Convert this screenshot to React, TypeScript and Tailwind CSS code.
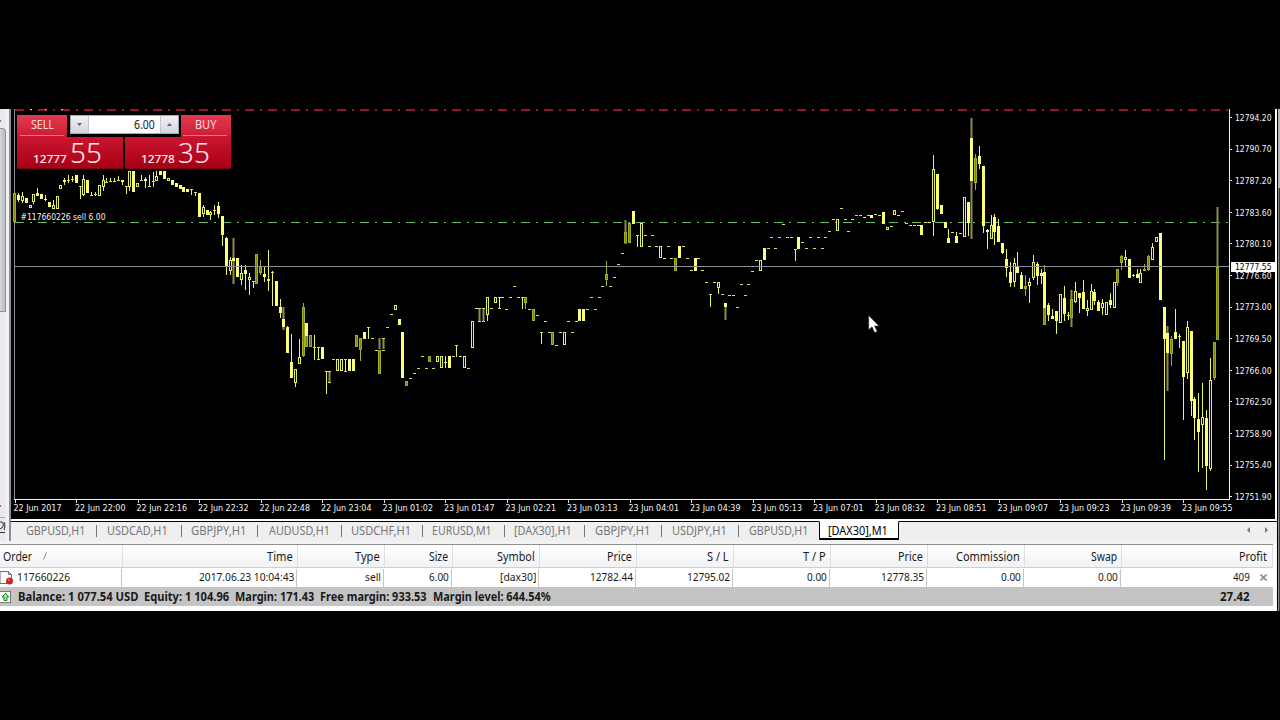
import { useLayoutEffect, useRef, useState } from 'react'

// f = filled, h = hollow, d = shaded, p = pale bar, x = doji
type Kind = 'f' | 'h' | 'd' | 'p' | 'x'
// x, kind, body top, body bottom, wick top, wick bottom, faded wick
type Candle = [number, Kind, number, number, number?, number?, number?]

// candle coordinates are thirds of a pixel, relative to the block origin
const BLOCKS: { ox: number; oy: number; candles: Candle[] }[] = [
  {
    ox: 0,
    oy: 100,
    candles: [
      [45, 'd', 280, 366, 276, 368], [56, 'f', 285, 300, 280, 307], [68, 'h', 288, 302, 275, 308],
      [79, 'f', 294, 308], [91, 'h', 315, 323], [102, 'h', 283, 306, 283, 312],
      [113, 'f', 279, 287, 265, 287], [125, 'f', 283, 297], [137, 'f', 296, 301, 285, 303],
      [149, 'f', 305, 322], [160, 'h', 316, 328, 300, 328], [172, 'h', 288, 328],
      [183, 'h', 256, 268], [194, 'f', 240, 245, 235, 256], [206, 'x', 240, 240, 225, 248],
      [217, 'x', 236, 236, 228, 246], [229, 'f', 226, 250], [241, 'x', 257, 257, 257, 296],
      [252, 'h', 238, 284, 226, 290], [264, 'f', 240, 278], [275, 'x', 285, 285, 276, 288],
      [287, 'x', 282, 282, 276, 288], [299, 'h', 256, 287], [310, 'h', 240, 262, 226, 275],
      [321, 'x', 245, 245, 235, 248], [333, 'x', 243, 243, 235, 248], [345, 'x', 243, 243, 235, 248],
      [356, 'x', 240, 240, 228, 244], [368, 'f', 241, 247, 240, 256], [380, 'x', 257, 257, 257, 282],
      [390, 'h', 214, 260, 214, 275], [402, 'f', 214, 276], [414, 'h', 248, 262],
      [425, 'x', 240, 240, 226, 244], [437, 'f', 238, 243, 230, 262], [448, 'x', 258, 258, 226, 262],
      [460, 'x', 244, 244, 215, 260], [471, 'h', 228, 242, 214, 242], [483, 'f', 214, 226],
      [495, 'f', 214, 238], [506, 'h', 235, 242], [518, 'f', 240, 254], [529, 'f', 250, 260],
      [541, 'f', 255, 266], [552, 'f', 262, 275], [564, 'f', 267, 276], [575, 'x', 268, 268, 268, 286],
      [587, 'x', 275, 275, 275, 288], [598, 'f', 280, 350], [610, 'h', 320, 342, 316, 352],
      [622, 'f', 330, 346], [633, 'h', 336, 346, 334, 362], [645, 'x', 331, 331, 316, 346],
      [656, 'f', 318, 342, 306, 355],
    ],
  },
  {
    ox: 0,
    oy: 220,
    candles: [
      [667, 'f', -12, 44, -12, 77], [679, 'f', 53, 139, 50, 163], [691, 'h', 120, 152, 110, 163],
      [702, 'f', 114, 122, 55, 192, 1], [713, 'f', 114, 172], [725, 'h', 158, 180, 136, 197],
      [737, 'f', 150, 161, 136, 212], [748, 'h', 171, 179, 158, 224], [760, 'x', 183, 183, 183, 204],
      [771, 'd', 102, 191], [782, 'd', 138, 160, 121, 166], [794, 'f', 161, 172, 140, 185],
      [806, 'h', 176, 184, 90, 212], [817, 'x', 157, 157, 154, 258], [829, 'f', 182, 258],
      [841, 'f', 262, 278, 236, 292], [852, 'f', 297, 320, 262, 332, 1], [863, 'f', 322, 399, 318, 399],
      [875, 'f', 426, 473, 342, 473], [886, 'h', 447, 488, 447, 500], [898, 'h', 412, 433, 357, 433],
      [910, 'd', 262, 408, 250, 413], [921, 'd', 346, 382], [921, 'f', 310, 348], [932, 'p', 346, 382],
      [943, 'x', 381, 381, 346, 420],
    ],
  },
  {
    ox: 300,
    oy: 200,
    candles: [
      [56, 'x', 441, 441, 440, 478], [56, 'x', 478, 478], [67, 'f', 440, 478], [79, 'x', 514, 514, 514, 583],
      [90, 'x', 514, 514, 514, 547, 1], [90, 'x', 547, 547], [101, 'x', 478, 478],
      [113, 'h', 478, 514], [125, 'h', 478, 514], [137, 'x', 478, 478, 478, 514], [137, 'x', 514, 514],
      [148, 'f', 478, 514], [160, 'f', 478, 514], [171, 'd', 405, 442], [182, 'd', 415, 449, 415, 485],
      [194, 'f', 396, 416], [206, 'x', 380, 380, 380, 416], [217, 'x', 415, 415], [229, 'x', 449, 449],
      [240, 'd', 449, 522, 415, 449, 1], [252, 'x', 415, 415, 415, 449, 1], [252, 'x', 449, 449],
      [263, 'x', 380, 380], [275, 'x', 343, 343], [286, 'h', 316, 331], [298, 'f', 357, 374],
      [309, 'f', 397, 534], [321, 'd', 544, 559], [333, 'x', 533, 533], [343, 'x', 519, 519],
      [355, 'x', 505, 505], [367, 'x', 469, 469], [379, 'x', 505, 505], [390, 'd', 469, 487],
      [402, 'x', 505, 505], [413, 'h', 469, 487], [425, 'h', 469, 505], [436, 'x', 487, 487, 469, 505],
      [448, 'f', 469, 505], [460, 'x', 469, 469], [471, 'x', 436, 436, 434, 469], [483, 'x', 469, 469],
      [494, 'h', 469, 505], [505, 'x', 505, 505], [517, 'h', 364, 445], [529, 'x', 325, 325],
      [540, 'x', 325, 325, 325, 364, 1], [540, 'x', 364, 364], [550, 'x', 325, 325, 325, 364, 1], [550, 'x', 364, 364],
      [562, 'h', 292, 346, 292, 364], [574, 'x', 325, 325], [586, 'h', 292, 310], [598, 'x', 292, 292, 292, 325],
      [598, 'x', 325, 325], [609, 'x', 292, 292], [620, 'x', 328, 328], [631, 'x', 292, 292], [643, 'x', 257, 257],
      [655, 'x', 292, 292], [667, 'x', 292, 292, 292, 328], [678, 'd', 292, 310, 292, 328],
      [690, 'x', 328, 328], [701, 'd', 328, 364], [712, 'x', 346, 346], [725, 'x', 397, 397, 397, 434],
      [736, 'x', 364, 364], [748, 'x', 397, 397], [759, 'd', 397, 434], [770, 'x', 434, 434],
      [782, 'x', 397, 397], [793, 'h', 397, 434], [805, 'x', 364, 364], [817, 'x', 397, 397],
      [829, 'x', 364, 364], [840, 'f', 328, 364], [851, 'f', 328, 364], [863, 'x', 328, 328],
      [874, 'x', 292, 292], [886, 'x', 328, 328], [898, 'x', 292, 292], [908, 'x', 257, 257],
      [920, 'd', 223, 240, 183, 257], [931, 'x', 257, 257], [943, 'x', 232, 232],
    ],
  },
  {
    ox: 600,
    oy: 190,
    candles: [
      [55, 'x', 223, 223], [67, 'x', 189, 189], [78, 'd', 125, 158, 90, 162, 1], [90, 'd', 98, 160],
      [101, 'f', 62, 101], [112, 'x', 134, 134, 134, 170], [124, 'h', 98, 170], [136, 'x', 134, 134],
      [148, 'x', 169, 169], [159, 'x', 134, 134], [170, 'x', 169, 169], [181, 'h', 169, 205],
      [193, 'x', 204, 204], [205, 'x', 169, 169], [216, 'x', 204, 204], [228, 'd', 205, 242],
      [239, 'f', 169, 205], [251, 'x', 169, 169], [263, 'x', 204, 204], [275, 'x', 241, 241],
      [286, 'f', 205, 242], [297, 'x', 204, 204], [309, 'x', 241, 241], [320, 'x', 275, 275],
      [332, 'x', 311, 311, 311, 349], [343, 'x', 275, 275], [355, 'h', 275, 293, 275, 311],
      [367, 'x', 311, 311], [378, 'f', 338, 351, 338, 388, 1], [390, 'x', 316, 316], [401, 'x', 316, 316],
      [412, 'x', 350, 350], [424, 'x', 281, 281], [436, 'x', 316, 316], [447, 'x', 281, 281],
      [459, 'x', 244, 244], [470, 'x', 209, 209], [481, 'h', 209, 244], [493, 'f', 175, 209],
      [505, 'x', 175, 175], [516, 'x', 140, 140], [528, 'x', 175, 175], [539, 'x', 140, 140],
      [551, 'x', 103, 103], [563, 'x', 140, 140], [574, 'x', 140, 140], [586, 'x', 176, 176, 176, 211],
      [597, 'f', 140, 176], [608, 'x', 157, 157], [620, 'x', 175, 175], [632, 'x', 140, 140],
      [643, 'x', 175, 175], [655, 'x', 140, 140], [667, 'x', 175, 175], [678, 'x', 140, 140],
      [689, 'x', 123, 123], [701, 'x', 88, 88], [712, 'h', 88, 123], [724, 'x', 54, 54],
      [736, 'x', 88, 88], [747, 'x', 123, 123], [759, 'x', 88, 88], [770, 'x', 74, 74],
      [782, 'x', 74, 74], [793, 'x', 82, 82], [805, 'x', 74, 74], [816, 'f', 74, 83],
      [828, 'x', 71, 71], [839, 'x', 74, 74], [851, 'f', 66, 101], [862, 'h', 111, 119],
      [874, 'x', 109, 109], [885, 'h', 60, 75], [897, 'x', 76, 76], [908, 'x', 63, 63],
    ],
  },
  {
    ox: 900,
    oy: 100,
    candles: [
      [20, 'x', 369, 369], [31, 'x', 376, 376], [43, 'x', 376, 376], [55, 'x', 376, 376],
      [66, 'f', 376, 405], [78, 'x', 367, 367], [89, 'x', 367, 367], [100, 'h', 208, 367, 166, 409],
      [112, 'f', 223, 326, 223, 331], [124, 'f', 316, 342], [136, 'f', 367, 383], [147, 'f', 415, 429, 388, 429],
      [158, 'x', 396, 396], [169, 'f', 409, 428, 396, 428], [181, 'x', 399, 399], [193, 'h', 292, 410],
      [205, 'f', 307, 369, 307, 409], [216, 'f', 114, 243, 53, 416, 1], [227, 'd', 175, 250, 162, 270],
      [239, 'f', 168, 191, 138, 206], [250, 'f', 197, 377, 197, 398], [262, 'f', 389, 397, 386, 446],
      [274, 'h', 374, 416, 346, 416], [285, 'f', 352, 395, 342, 434], [297, 'f', 378, 426, 357, 426],
      [308, 'f', 430, 459, 430, 463], [320, 'f', 476, 503, 447, 530], [332, 'f', 516, 549, 487, 563],
      [343, 'h', 490, 545, 475, 563], [354, 'f', 500, 518, 455, 518], [366, 'f', 525, 566, 517, 566],
      [377, 'd', 558, 566, 525, 587], [389, 'h', 547, 557, 533, 609], [401, 'h', 487, 535, 466, 541],
      [412, 'f', 492, 527, 487, 557], [424, 'f', 519, 527, 507, 552], [435, 'd', 620, 676, 496, 676],
      [435, 'f', 516, 624], [446, 'f', 614, 644, 610, 665], [458, 'f', 647, 656, 627, 656],
      [469, 'f', 633, 662, 633, 702], [481, 'h', 583, 670], [493, 'f', 594, 641, 558, 662],
      [505, 'x', 646, 646, 636, 660], [515, 'd', 597, 653, 570, 682, 1], [527, 'h', 574, 606, 547, 609],
      [539, 'f', 579, 594, 579, 638], [550, 'f', 576, 626, 541, 626], [562, 'h', 625, 633, 600, 647],
      [574, 'h', 574, 631, 552, 631], [585, 'f', 576, 602, 567, 614], [596, 'f', 606, 632, 600, 632],
    ],
  },
  {
    ox: 1090,
    oy: 190,
    candles: [
      [38, 'h', 340, 355, 327, 374], [49, 'h', 337, 376], [61, 'f', 330, 344, 309, 354], [73, 'h', 276, 353],
      [84, 'd', 238, 280, 238, 288], [96, 'd', 199, 220, 194, 240], [107, 'h', 201, 209, 180, 231],
      [119, 'f', 208, 265], [130, 'x', 254, 254, 252, 262], [142, 'f', 252, 265, 237, 265],
      [153, 'h', 250, 278, 237, 278], [165, 'd', 236, 242, 222, 242], [176, 'd', 199, 241, 194, 241],
      [187, 'h', 170, 209, 160, 209], [199, 'h', 140, 155], [211, 'f', 129, 331], [223, 'f', 350, 446, 350, 808],
      [234, 'f', 430, 488, 409, 604, 1], [246, 'd', 448, 493, 438, 529], [257, 'f', 427, 448, 357, 448],
      [268, 'x', 438, 438, 432, 475], [280, 'f', 454, 560, 454, 692], [292, 'h', 412, 550, 392, 566],
      [304, 'f', 422, 634, 422, 676], [315, 'f', 628, 685, 622, 751], [326, 'f', 688, 727, 609, 845],
      [338, 'h', 682, 706, 579, 834], [349, 'f', 684, 829, 660, 899], [361, 'h', 571, 838, 505, 845],
      [373, 'd', 457, 565, 457, 571], [384, 'd', 230, 451, 51, 230, 1],
    ],
  },
]

const PRICES = [
  '12794.20', '12790.70', '12787.20', '12783.60', '12780.10', '12776.60', '12773.00',
  '12769.50', '12766.00', '12762.50', '12758.90', '12755.40', '12751.90',
]

const DATES = [
  '22 Jun 2017', '22 Jun 22:00', '22 Jun 22:16', '22 Jun 22:32', '22 Jun 22:48', '22 Jun 23:04',
  '23 Jun 01:02', '23 Jun 01:47', '23 Jun 02:21', '23 Jun 03:13', '23 Jun 04:01', '23 Jun 04:39',
  '23 Jun 05:13', '23 Jun 07:01', '23 Jun 08:32', '23 Jun 08:51', '23 Jun 09:07', '23 Jun 09:23',
  '23 Jun 09:39', '23 Jun 09:55',
]

const TABS = [
  { name: 'GBPUSD,H1', text: 59, cell: 'w-[86px] pl-[15px]' },
  { name: 'USDCAD,H1', text: 61, cell: 'w-[85px] pl-[10px]' },
  { name: 'GBPJPY,H1', text: 55, cell: 'w-[76px] pl-[9px]' },
  { name: 'AUDUSD,H1', text: 61, cell: 'w-[84px] pl-[11px]' },
  { name: 'USDCHF,H1', text: 60, cell: 'w-[81px] pl-[9px]' },
  { name: 'EURUSD,M1', text: 60, cell: 'w-[82px] pl-[9px]' },
  { name: '[DAX30],H1', text: 58, cell: 'w-[80px] pl-[9px]' },
  { name: 'GBPJPY,H1', text: 55, cell: 'w-[77px] pl-[10px]' },
  { name: 'USDJPY,H1', text: 55, cell: 'w-[77px] pl-[10px]' },
  { name: 'GBPUSD,H1', text: 59, cell: 'w-[80px] pl-[10px]' },
]

const COLUMNS = [
  { head: 'Time', headW: 26, value: '2017.06.23 10:04:43', valueW: 95, cell: 'w-[175px]' },
  { head: 'Type', headW: 25, value: 'sell', valueW: 16, cell: 'w-[87px]' },
  { head: 'Size', headW: 19, value: '6.00', valueW: 20, cell: 'w-[68px]' },
  { head: 'Symbol', headW: 38, value: '[dax30]', valueW: 36, cell: 'w-[87px]' },
  { head: 'Price', headW: 25, value: '12782.44', valueW: 43, cell: 'w-[97px]' },
  { head: 'S / L', headW: 22, value: '12795.02', valueW: 43, cell: 'w-[97px]' },
  { head: 'T / P', headW: 23, value: '0.00', valueW: 20, cell: 'w-[97px]' },
  { head: 'Price', headW: 25, value: '12778.35', valueW: 43, cell: 'w-[97px]' },
  { head: 'Commission', headW: 64, value: '0.00', valueW: 20, cell: 'w-[97px]' },
  { head: 'Swap', headW: 26, value: '0.00', valueW: 20, cell: 'w-[97px]' },
]

const ACCOUNT = [
  { text: 'Balance: 1 077.54 USD', width: 120 },
  { text: 'Equity: 1 104.96', width: 85 },
  { text: 'Margin: 171.43', width: 79 },
  { text: 'Free margin: 933.53', width: 107 },
  { text: 'Margin level: 644.54%', width: 118 },
]

// squeezes a single line of text to a fixed width
function Fit({ w, children }: { w: number; children: string }) {
  const ref = useRef<HTMLSpanElement>(null)
  const [scale, setScale] = useState(1)

  useLayoutEffect(() => {
    if (ref.current) setScale(w / ref.current.offsetWidth)
  }, [w])

  return (
    <span className="inline-block shrink-0" style={{ width: w }}>
      <span ref={ref} className="inline-block origin-left whitespace-pre" style={{ transform: `scaleX(${scale})` }}>
        {children}
      </span>
    </span>
  )
}

const BRIGHT = '#fbff7c'
const LINE = '#e3f060'

function CandleMark({ candle, ox, oy }: { candle: Candle; ox: number; oy: number }) {
  const [cx, kind, top, bottom, high, low, faded] = candle
  const x = Math.round(ox + cx / 3 - 0.6)
  const y1 = Math.round(oy + top / 3)
  const y2 = Math.round(oy + bottom / 3)
  const h = Math.max(1, y2 - y1)
  const wick =
    high !== undefined && low !== undefined ? (
      <rect
        x={faded ? x - 0.5 : x}
        y={Math.round(oy + high / 3)}
        width={faded ? 2 : 1}
        height={Math.max(1, Math.round((low - high) / 3))}
        fill={faded ? '#8c8c50' : kind === 'd' ? '#a5ad2c' : '#eaf366'}
      />
    ) : null

  if (kind === 'x') {
    return (
      <g>
        {wick}
        <rect x={x - 1} y={y1} width={3} height={1} fill="#d8e268" />
      </g>
    )
  }
  return (
    <g>
      {wick}
      {kind === 'f' ? (
        <rect x={x - 1} y={y1} width={3} height={h} fill={BRIGHT} />
      ) : (
        <rect
          x={x - 0.5}
          y={y1 + 0.5}
          width={2}
          height={Math.max(1, h - 1)}
          fill={kind === 'h' ? '#000' : kind === 'd' ? '#7d8400' : '#55592c'}
          stroke={kind === 'h' ? LINE : '#a3ad22'}
        />
      )}
    </g>
  )
}

function Chart() {
  return (
    <svg width="1264" height="410" viewBox="11 109 1264 410" className="block shrink-0 bg-black" fontFamily="'DejaVu Sans Condensed', 'DejaVu Sans', sans-serif" fontSize="9">
      <rect x="14" y="109" width="1" height="391" fill="#8f8f8f" />
      <path d="M15 110H1229" stroke="#c41e34" strokeWidth="1.6" strokeDasharray="9 6 2 6" />
      <path d="M30 109.5h2M45 109.5h1.500M61 109.5h2" stroke="#c8c8c8" />
      <path d="M15 222.5H1229" stroke="#68ba64" strokeDasharray="9 6 2 6" />
      {BLOCKS.map(b => b.candles.map((c, i) => <CandleMark key={b.ox + '-' + i} candle={c} ox={b.ox} oy={b.oy} />))}
      <path d="M15 266.5H1229" stroke="#8d8d93" />
      <text x="20.5" y="220" fill="#f0f0f0" textLength="85" lengthAdjust="spacingAndGlyphs">#117660226 sell 6.00</text>

      <path d="M14 499.5H1229.5V109" fill="none" stroke="#f4f4f4" />
      {PRICES.map((p, i) => (
        <g key={p}>
          <rect x="1230" y={Math.round(117 + i * 31.6)} width="2" height="1" fill="#f0f0f0" />
          <text x="1235" y={120.7 + i * 31.6} fill="#f4f4f4" textLength="36.5" lengthAdjust="spacingAndGlyphs">{p}</text>
        </g>
      ))}
      <rect x="1231" y="262" width="44" height="10" fill="#fff" />
      <text x="1235" y="270.3" fill="#000" textLength="36.5" lengthAdjust="spacingAndGlyphs">12777.55</text>
      {DATES.map((d, i) => (
        <g key={d}>
          <rect x={Math.round(14.5 + i * 61.5)} y="500" width="1" height="3" fill="#f0f0f0" />
          <text x={13.5 + i * 61.5} y="511.3" fill="#f4f4f4" textLength={i ? 50.5 : 48} lengthAdjust="spacingAndGlyphs">{d}</text>
        </g>
      ))}

      <path d="M868.7 315.5v14.3l3.3-3 2.6 5.8 2.6-1.2-2.6-5.5h4.3z" fill="#fff" stroke="#222" strokeWidth=".5" />
    </svg>
  )
}

function QuoteButton({ whole, pips }: { whole: string; pips: string }) {
  return (
    <div className="flex h-8 w-[106px] items-end justify-center border-b border-[#7c0614] bg-linear-to-b from-[#cb1530] to-[#a80014] pr-[5px] text-[#ffecec]">
      <span className="mr-[3px] mb-[2px] text-[11.5px] leading-[15px] font-medium"><Fit w={34}>{whole}</Fit></span>
      <span className="mb-px text-[27px] leading-[29px] font-light"><Fit w={32}>{pips}</Fit></span>
    </div>
  )
}

function OneClickPanel() {
  return (
    <div className="absolute top-[6px] left-[6px] w-[214px] font-['Noto_Sans',sans-serif]">
      <div className="flex h-[22px] justify-between">
        <div className="flex w-[50px] flex-col items-center bg-linear-to-b from-[#e23a50] to-[#cc1833] text-[12px] leading-[20px] text-[#ffdede]">
          <Fit w={23}>SELL</Fit>
          <div className="h-px w-11 bg-[#ec7482]" />
        </div>
        <div className="flex h-[19px] w-[109px] border border-[#a9a9b4] bg-white text-[12px] leading-[17px] text-[#1b1b22]">
          <div className="flex w-[18px] items-center justify-center border-r border-[#c4c4ce] bg-linear-to-b from-[#efeff4] to-[#d6d6df]">
            <svg width="5" height="3"><path d="M0 0h5L2.5 3z" fill="#5d6480" /></svg>
          </div>
          <div className="flex-1 pr-[5px] text-right"><Fit w={21}>6.00</Fit></div>
          <div className="flex w-[18px] items-center justify-center border-l border-[#c4c4ce] bg-linear-to-b from-[#efeff4] to-[#d6d6df]">
            <svg width="5" height="3"><path d="M0 3h5L2.5 0z" fill="#5d6480" /></svg>
          </div>
        </div>
        <div className="flex w-[50px] flex-col items-center bg-linear-to-b from-[#e23a50] to-[#cc1833] pr-[2px] text-[12px] leading-[20px] text-[#ffdede]">
          <Fit w={21}>BUY</Fit>
          <div className="h-px w-11 bg-[#ec7482]" />
        </div>
      </div>
      <div className="flex justify-between">
        <QuoteButton whole="12777" pips="55" />
        <QuoteButton whole="12778" pips="35" />
      </div>
    </div>
  )
}

function LeftEdge() {
  return (
    <div className="flex w-[11px] shrink-0 border-r-2 border-[#8d8d92] bg-[#f1f1f5]">
      <div className="flex w-[6px] flex-col bg-[#e9e9ee]">
        <div className="h-[19px] pt-[11px]"><div className="h-[2px] w-[1px] bg-[#777]" /></div>
        <div className="h-[184px] rounded-tr-sm border-t border-r border-b border-[#8f8f96] bg-linear-to-r from-[#d4d4da] to-[#bcbcc4]" />
        <div className="mt-[193px] h-[2px] w-[1px] bg-[#777]" />
        <svg width="6" height="17" className="mt-[10px]">
          <path d="M0 .5h5" stroke="#aaa" />
          <path d="M0 5h2q2 1 1 5l-3 2M4 5q2 4 0 8M0 15.5h5" fill="none" stroke="#333" />
        </svg>
      </div>
    </div>
  )
}

function ChartTabs() {
  return (
    <div className="flex h-5 border-t border-black bg-[#efefef] text-[12px] leading-[18px] text-[#777]">
      {TABS.map((t, i) => (
        <div key={i} className={'flex h-[17px] shrink-0 items-center ' + t.cell}>
          <span className="flex-1"><Fit w={t.text}>{t.name}</Fit></span>
          {i < TABS.length - 1 && <span className="h-3 w-px bg-[#777]" />}
        </div>
      ))}
      <div className="-mt-px h-[19px] w-[80px] shrink-0 border-x border-t border-b-2 border-black border-t-white bg-white pl-[8px] leading-[17px] text-black">
        <Fit w={60}>[DAX30],M1</Fit>
      </div>
      <div className="flex h-[16px] flex-1 items-center justify-end gap-[15px] pr-[9px]">
        <svg width="3" height="6"><path d="M3 0v6L0 3z" fill="#777" /></svg>
        <svg width="3" height="6"><path d="M0 0v6l3-3z" fill="#777" /></svg>
      </div>
    </div>
  )
}

function Terminal() {
  return (
    <div className="w-[1276px] bg-white pr-[3px] text-[#1a1a1a]">
      <div className="flex h-[24px] border-t border-b border-t-[#8e8e8e] border-b-[#cfcfcf] bg-linear-to-b from-white to-[#f1f2f4] text-[12px] leading-[23px]">
        <div className="flex w-[123px] shrink-0 items-center gap-[11px] border-r border-[#dcdde0] pl-[3px]">
          <Fit w={29}>Order</Fit>
          <svg width="5" height="8"><path d="M.5 7.5l3-7" stroke="#888" /></svg>
        </div>
        {COLUMNS.map((c, i) => (
          <div key={i} className={'shrink-0 border-r border-[#dcdde0] pr-[4px] text-right ' + c.cell}>
            <Fit w={c.headW}>{c.head}</Fit>
          </div>
        ))}
        <div className="flex-1 border-r border-[#dcdde0] pr-[5px] text-right"><Fit w={28}>Profit</Fit></div>
      </div>

      <div className="flex h-[19px] pt-px text-[11.5px] leading-[15px]">
        <div className="flex w-[122px] shrink-0 border-r border-[#c6c6c6]">
          <svg width="17" height="16" className="shrink-0">
            <path d="M0 2.5h8.5l3 3v9H0z" fill="#fbfbff" stroke="#6c6c86" />
            <path d="M8.5 2.5v3h3" fill="none" stroke="#6c6c86" />
            <circle cx="9.5" cy="12" r="3.5" fill="#c8281c" />
            <circle cx="8.7" cy="11" r="1" fill="#ee7a68" />
          </svg>
          <Fit w={53}>117660226</Fit>
        </div>
        {COLUMNS.map((c, i) => (
          <div key={i} className={'shrink-0 border-r border-[#c6c6c6] pr-[2px] text-right ' + c.cell}>
            <Fit w={c.valueW}>{c.value}</Fit>
          </div>
        ))}
        <div className="flex flex-1 justify-end gap-[10px] pr-[6px]">
          <Fit w={17}>409</Fit>
          <svg width="7" height="7" className="mt-[5px]"><path d="M.5.5l6 6M6.5.5l-6 6" stroke="#8c8c8c" strokeWidth="1.6" /></svg>
        </div>
      </div>

      <div className="flex h-[19px] items-center bg-[#c4c4c4] pr-[23px] text-[11.5px] leading-[18px] font-bold">
        <svg width="18" height="14" className="shrink-0">
          <rect x="-.5" y="1.5" width="11" height="11" fill="#fff" stroke="#777" />
          <path d="M5.5 3.200L8.800 7H7v3.500H4V7H2.200z" fill="#a4e89a" stroke="#128a1e" />
        </svg>
        <div className="flex flex-1 gap-[6px]">
          {ACCOUNT.map(a => <Fit key={a.text} w={a.width}>{a.text}</Fit>)}
        </div>
        <Fit w={30}>27.42</Fit>
      </div>
      <div className="h-[5px]" />
    </div>
  )
}

export default function App() {
  return (
    <div className="flex h-[720px] w-[1280px] flex-col overflow-hidden bg-black py-[109px] font-['Noto_Sans',sans-serif]">
      <div className="flex h-[502px] shrink-0">
        <div className="flex w-[1277px] shrink-0 flex-col bg-[#f3f3f3]">
          <div className="flex h-[432px] shrink-0">
            <LeftEdge />
            <div className="relative flex w-[1266px] flex-col bg-white">
              <Chart />
              <OneClickPanel />
              <div className="mt-[2px]"><ChartTabs /></div>
            </div>
          </div>
          <div className="mt-[3px]"><Terminal /></div>
        </div>
        <div className="w-px shrink-0 bg-black" />
        <div className="flex w-[2px] shrink-0 flex-col">
          <div className="h-[79px] bg-[#b5b5b5]" />
          <div className="flex-1 border-l border-[#8a8a8a] bg-[#3c3c3c]" />
        </div>
      </div>
    </div>
  )
}
